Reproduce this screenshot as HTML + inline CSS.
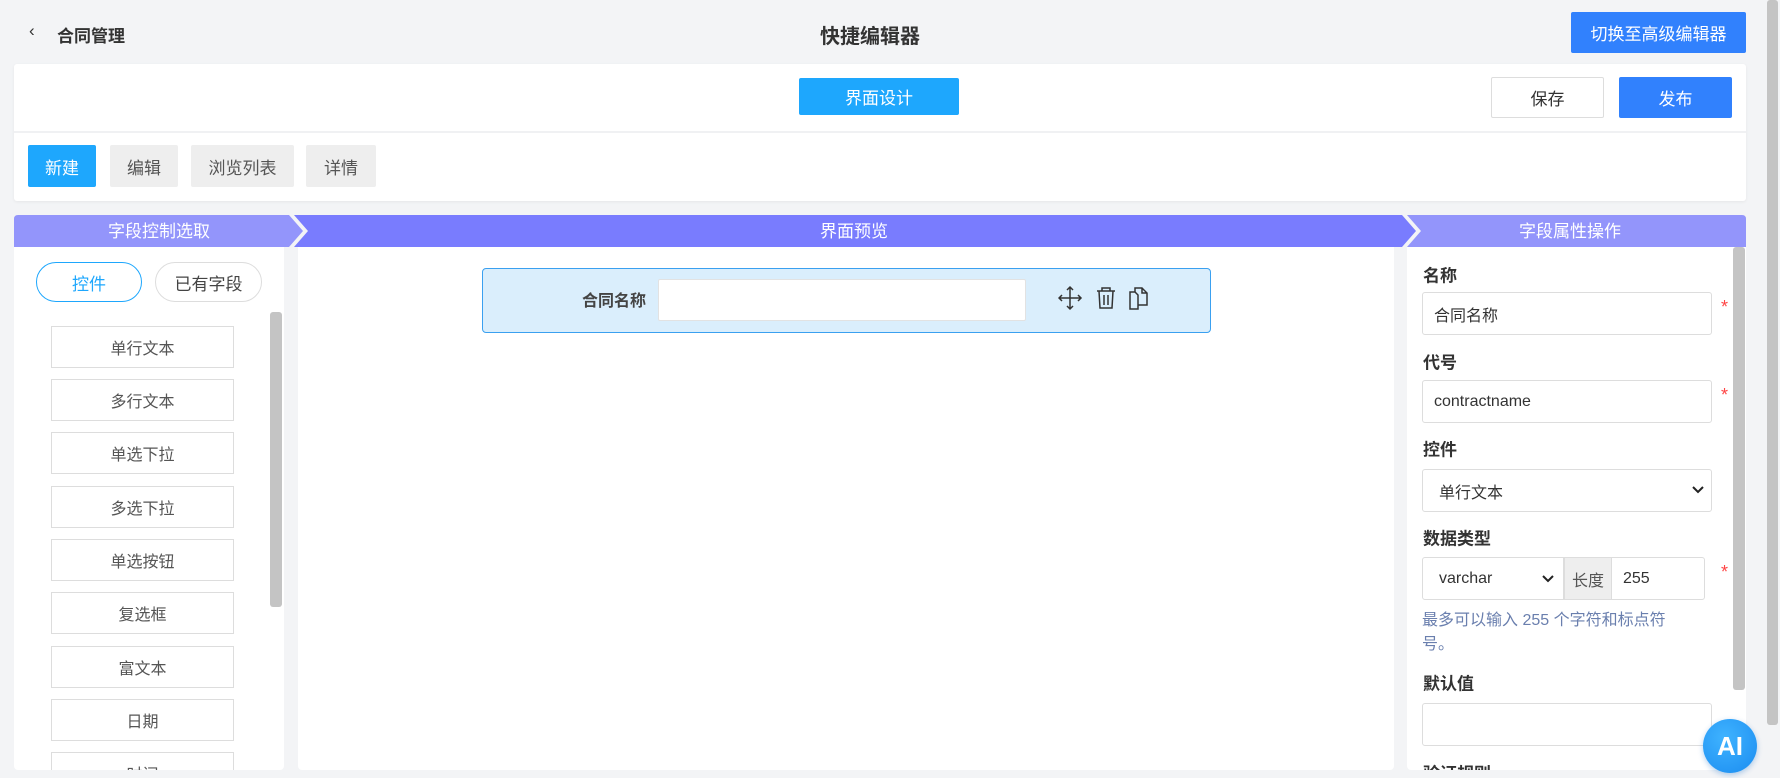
<!DOCTYPE html>
<html><head><meta charset="utf-8"><style>
*{box-sizing:border-box;margin:0;padding:0}
body{width:1780px;height:778px;overflow:hidden;background:#f3f4f6;font-family:"Liberation Sans","Noto Sans CJK SC",sans-serif;color:#333;position:relative}
.a{position:absolute}
.c{display:flex;align-items:center;justify-content:center}
.btn{position:absolute;display:flex;align-items:center;justify-content:center;font-size:17px;border-radius:2px}
.item{position:absolute;left:37px;width:183px;height:42px;border:1px solid #ddd;display:flex;align-items:center;justify-content:center;font-size:16px;color:#555;background:#fff}
.lbl{position:absolute;left:16px;font-size:17px;font-weight:bold;color:#333;transform:translateY(-50%)}
.inp{position:absolute;left:15px;width:290px;height:43px;border:1px solid #ddd;border-radius:3px;background:#fff;font-size:16px;color:#333;display:flex;align-items:center;padding-left:11px}
.star{position:absolute;left:314px;color:#f44;font-size:18px}
.panel{position:absolute;top:247px;height:523px;background:#fff;border-radius:0 0 4px 4px;overflow:hidden}
</style></head><body>
<div class="a" style="left:29px;top:21px;font-size:17px;color:#333">‹</div>
<div class="a" style="left:57px;top:22px;font-size:17px;font-weight:bold;color:#333">合同管理</div>
<div class="a" style="left:770px;top:20px;width:200px;text-align:center;font-size:20px;font-weight:bold;color:#333">快捷编辑器</div>
<div class="btn" style="left:1571px;top:12px;width:175px;height:41px;background:#3181fd;color:#fff">切换至高级编辑器</div>
<div class="a" style="left:1767px;top:0;width:11px;height:725px;background:#c4c4c4;border-radius:3px"></div>

<div class="a" style="left:14px;top:64px;width:1732px;height:137px;background:#fff;border-radius:3px;box-shadow:0 1px 3px rgba(0,0,0,.06)"></div>
<div class="a" style="left:14px;top:131px;width:1732px;height:2px;background:#f0f1f3"></div>
<div class="btn" style="left:799px;top:78px;width:160px;height:37px;background:#1ea7fd;color:#fff">界面设计</div>
<div class="btn" style="left:1491px;top:77px;width:113px;height:41px;border:1px solid #ddd;background:#fff;color:#333">保存</div>
<div class="btn" style="left:1619px;top:77px;width:113px;height:41px;background:#3181fd;color:#fff">发布</div>
<div class="btn" style="left:28px;top:145px;width:68px;height:42px;background:#1ea7fd;color:#fff">新建</div>
<div class="btn" style="left:110px;top:145px;width:68px;height:42px;background:#eee;color:#555">编辑</div>
<div class="btn" style="left:191px;top:145px;width:103px;height:42px;background:#eee;color:#555">浏览列表</div>
<div class="btn" style="left:306px;top:145px;width:70px;height:42px;background:#eee;color:#555">详情</div>

<svg class="a" style="left:14px;top:215px" width="1732" height="32">
<path d="M0 4 Q0 0 4 0 H275 L289 16 L275 32 H0Z" fill="#9395fb"/>
<path d="M280 0 H1388 L1402 16 L1388 32 H280 L294 16Z" fill="#797cfe"/>
<path d="M1393 0 H1728 Q1732 0 1732 4 V32 H1393 L1407 16Z" fill="#9395fb"/>
<text x="145" y="22" fill="#fff" font-size="17" text-anchor="middle" font-family="Liberation Sans,Noto Sans CJK SC,sans-serif">字段控制选取</text>
<text x="840" y="22" fill="#fff" font-size="17" text-anchor="middle" font-family="Liberation Sans,Noto Sans CJK SC,sans-serif">界面预览</text>
<text x="1556" y="22" fill="#fff" font-size="17" text-anchor="middle" font-family="Liberation Sans,Noto Sans CJK SC,sans-serif">字段属性操作</text>
</svg>

<div class="panel" style="left:14px;width:270px">
<div class="btn" style="left:22px;top:15px;width:106px;height:40px;border:1px solid #1ea7fd;border-radius:20px;color:#1ea7fd;background:#fff">控件</div>
<div class="btn" style="left:141px;top:15px;width:107px;height:40px;border:1px solid #ddd;border-radius:20px;color:#444;background:#fff">已有字段</div>
<div class="a" style="left:256px;top:65px;width:12px;height:295px;background:#c4c4c4;border-radius:3px"></div>
<div class="item" style="top:79px">单行文本</div>
<div class="item" style="top:132px">多行文本</div>
<div class="item" style="top:185px">单选下拉</div>
<div class="item" style="top:239px">多选下拉</div>
<div class="item" style="top:292px">单选按钮</div>
<div class="item" style="top:345px">复选框</div>
<div class="item" style="top:399px">富文本</div>
<div class="item" style="top:452px">日期</div>
<div class="item" style="top:505px">时间</div>
</div>

<div class="panel" style="left:298px;width:1096px"></div>
<div class="a" style="left:482px;top:268px;width:729px;height:65px;background:#daeefc;border:1px solid #3aa0f0;border-radius:4px"></div>
<div class="a" style="left:546px;top:287px;width:100px;text-align:right;font-size:16px;font-weight:bold;color:#444">合同名称</div>
<div class="a" style="left:658px;top:279px;width:368px;height:42px;background:#fff;border:1px solid #e2e2e2;border-radius:2px"></div>
<svg class="a" style="left:1058px;top:284px" width="100" height="28" fill="none" stroke="#333" stroke-width="1.5">
<path d="M12 3 V25 M1 14 H23 M9 6 L12 3 L15 6 M9 22 L12 25 L15 22 M4 11 L1 14 L4 17 M20 11 L23 14 L20 17"/>
<path d="M39 7 H57 M44 7 V4 H52 V7 M41 7 L42 24 H54 L55 7 M46 11 V21 M50 11 V21"/>
<path d="M72 8 H77 L80 11 V25 H72Z M77 8 V4 H84 L89 9 V21 H80 M84 4 V9 H89"/>
</svg>

<div class="panel" style="left:1407px;width:339px">
<div class="a" style="left:326px;top:0;width:12px;height:443px;background:#c4c4c4;border-radius:3px"></div>
<div class="lbl" style="top:27px">名称</div>
<div class="inp" style="top:45px">合同名称</div><div class="star" style="top:50px">*</div>
<div class="lbl" style="top:114px">代号</div>
<div class="inp" style="top:133px">contractname</div><div class="star" style="top:138px">*</div>
<div class="lbl" style="top:201px">控件</div>
<div class="inp" style="top:222px;padding-left:16px">单行文本
<svg class="a" style="right:6px;top:15px" width="14" height="10"><path d="M2 2 L7 7 L12 2" stroke="#222" stroke-width="2" fill="none"/></svg></div>
<div class="lbl" style="top:290px">数据类型</div>
<div class="inp" style="top:310px;width:142px;padding-left:16px;border-radius:3px 0 0 3px">varchar
<svg class="a" style="right:8px;top:16px" width="14" height="10"><path d="M2 2 L7 7 L12 2" stroke="#222" stroke-width="2" fill="none"/></svg></div>
<div class="a c" style="left:157px;top:310px;width:48px;height:43px;background:#eee;border:1px solid #ddd;font-size:16px;color:#555">长度</div>
<div class="inp" style="left:204px;top:310px;width:94px;border-radius:0 3px 3px 0">255</div>
<div class="star" style="top:315px">*</div>
<div class="a" style="left:15px;top:362px;width:270px;font-size:16px;line-height:24px;color:#6a7fae">最多可以输入 255 个字符和标点符号。</div>
<div class="lbl" style="top:435px">默认值</div>
<div class="inp" style="top:456px"></div>
<div class="lbl" style="top:525px">验证规则</div>
</div>
<div class="a c" style="left:1703px;top:719px;width:54px;height:54px;border-radius:50%;background:radial-gradient(circle at 40% 35%,#3fb3ff,#1b8cf0);color:#fff;font-weight:bold;font-size:26px;box-shadow:0 2px 6px rgba(0,100,200,.3)">AI</div>
</body></html>
